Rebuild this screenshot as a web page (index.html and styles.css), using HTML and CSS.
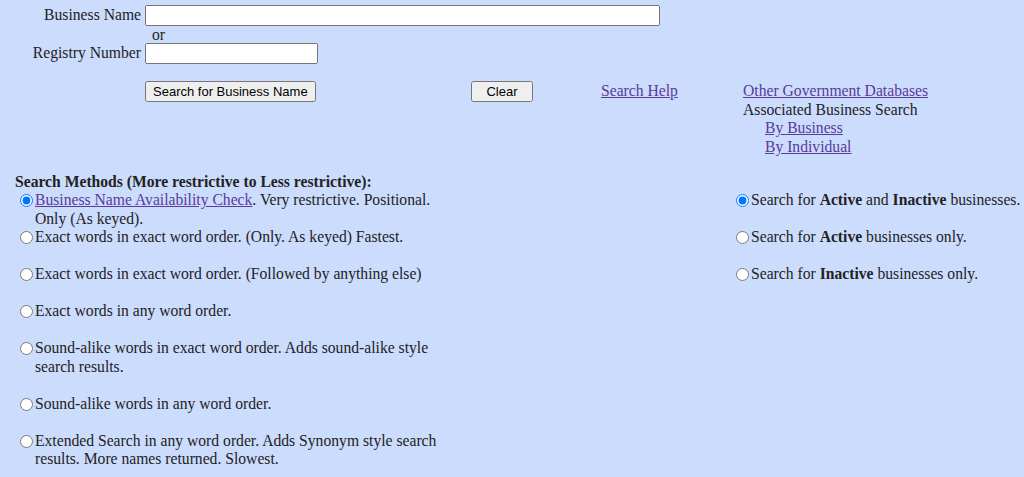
FILE: index.html
```html
<!DOCTYPE html>
<html lang="en">
<head>
    <meta charset="UTF-8">
    <title>Business Search</title>
    <link rel="stylesheet" href="styles.css">
</head>
<body>
    <form class="search-form">
        <div class="fields">
            <label class="field-label" for="bizName">Business Name</label>
            <input type="text" id="bizName" class="name-input">
            <span></span>
            <span class="or">or</span>
            <label class="field-label" for="regNum">Registry Number</label>
            <input type="text" id="regNum" class="reg-input">
        </div>

        <div class="actions">
            <div class="cell cell-search"><button type="button">Search for Business Name</button></div>
            <div class="cell cell-clear"><button type="button" class="clear-btn">Clear</button></div>
            <div class="cell cell-help"><a href="#">Search Help</a></div>
            <div class="cell cell-other">
                <a href="#">Other Government Databases</a><br>
                Associated Business Search
                <div class="sub-links">
                    <a href="#">By Business</a><br>
                    <a href="#">By Individual</a>
                </div>
            </div>
        </div>

        <div class="methods-title">Search Methods (More restrictive to Less restrictive):</div>

        <div class="options">
            <div class="col-left">
                <label class="opt first"><input type="radio" name="method" checked><span class="opt-text"><a href="#">Business Name Availability Check</a>. Very restrictive. Positional. Only (As keyed).</span></label>
                <label class="opt"><input type="radio" name="method"><span class="opt-text">Exact words in exact word order. (Only. As keyed) Fastest.</span></label>
                <label class="opt"><input type="radio" name="method"><span class="opt-text">Exact words in exact word order. (Followed by anything else)</span></label>
                <label class="opt"><input type="radio" name="method"><span class="opt-text">Exact words in any word order.</span></label>
                <label class="opt"><input type="radio" name="method"><span class="opt-text">Sound-alike words in exact word order. Adds sound-alike style search results.</span></label>
                <label class="opt"><input type="radio" name="method"><span class="opt-text">Sound-alike words in any word order.</span></label>
                <label class="opt"><input type="radio" name="method"><span class="opt-text">Extended Search in any word order. Adds Synonym style search results. More names returned. Slowest.</span></label>
            </div>
            <div class="col-right">
                <label class="opt"><input type="radio" name="status" checked><span>Search for <b>Active</b> and <b>Inactive</b> businesses.</span></label>
                <label class="opt"><input type="radio" name="status"><span>Search for <b>Active</b> businesses only.</span></label>
                <label class="opt"><input type="radio" name="status"><span>Search for <b>Inactive</b> businesses only.</span></label>
            </div>
        </div>
    </form>
</body>
</html>
```

FILE: styles.css
```css
body {
    margin: 0;
    padding-top: 5px;
    background-color: #ccdcfd;
    color: #222;
    font-family: "Liberation Serif", "Times New Roman", serif;
    font-size: 15.65px;
    line-height: 18.5px;
}
a {
    color: #5a3a9a;
}
.fields {
    display: grid;
    grid-template-columns: 141px auto;
    column-gap: 4px;
    align-items: center;
    justify-items: start;
}
.field-label {
    justify-self: end;
}
.or {
    padding-left: 7px;
    line-height: 17px;
}
.name-input {
    width: 507px;
}
.reg-input {
    width: 165px;
}
input[type="text"] {
    font-family: "Liberation Sans", Arial, sans-serif;
    font-size: 13.33px;
    margin: 0;
}
.actions {
    display: flex;
    align-items: flex-start;
    margin-top: 17px;
    margin-left: 145px;
}
button {
    font-family: "Liberation Sans", Arial, sans-serif;
    font-size: 13px;
    margin: 0;
}
.clear-btn {
    width: 62px;
}
.cell-search {
    width: 326px;
}
.cell-clear {
    width: 130px;
}
.cell-help {
    width: 142px;
    padding-top: 1px;
}
.cell-other {
    padding-top: 1px;
    line-height: 18.7px;
}
.sub-links {
    padding-left: 22px;
}
.methods-title {
    font-weight: bold;
    margin-top: 16px;
    padding-left: 15px;
}
.options {
    display: flex;
    align-items: flex-start;
    padding-left: 15px;
}
.col-left {
    width: 716px;
}
.col-right {
    white-space: nowrap;
}
.opt {
    display: flex;
    align-items: flex-start;
    margin-bottom: 18.5px;
}
.opt.first {
    margin-bottom: 0;
}
.opt input[type="radio"] {
    margin: 3px 2px 0 5px;
    flex-shrink: 0;
}
.opt-text {
    width: 415px;
}
```
